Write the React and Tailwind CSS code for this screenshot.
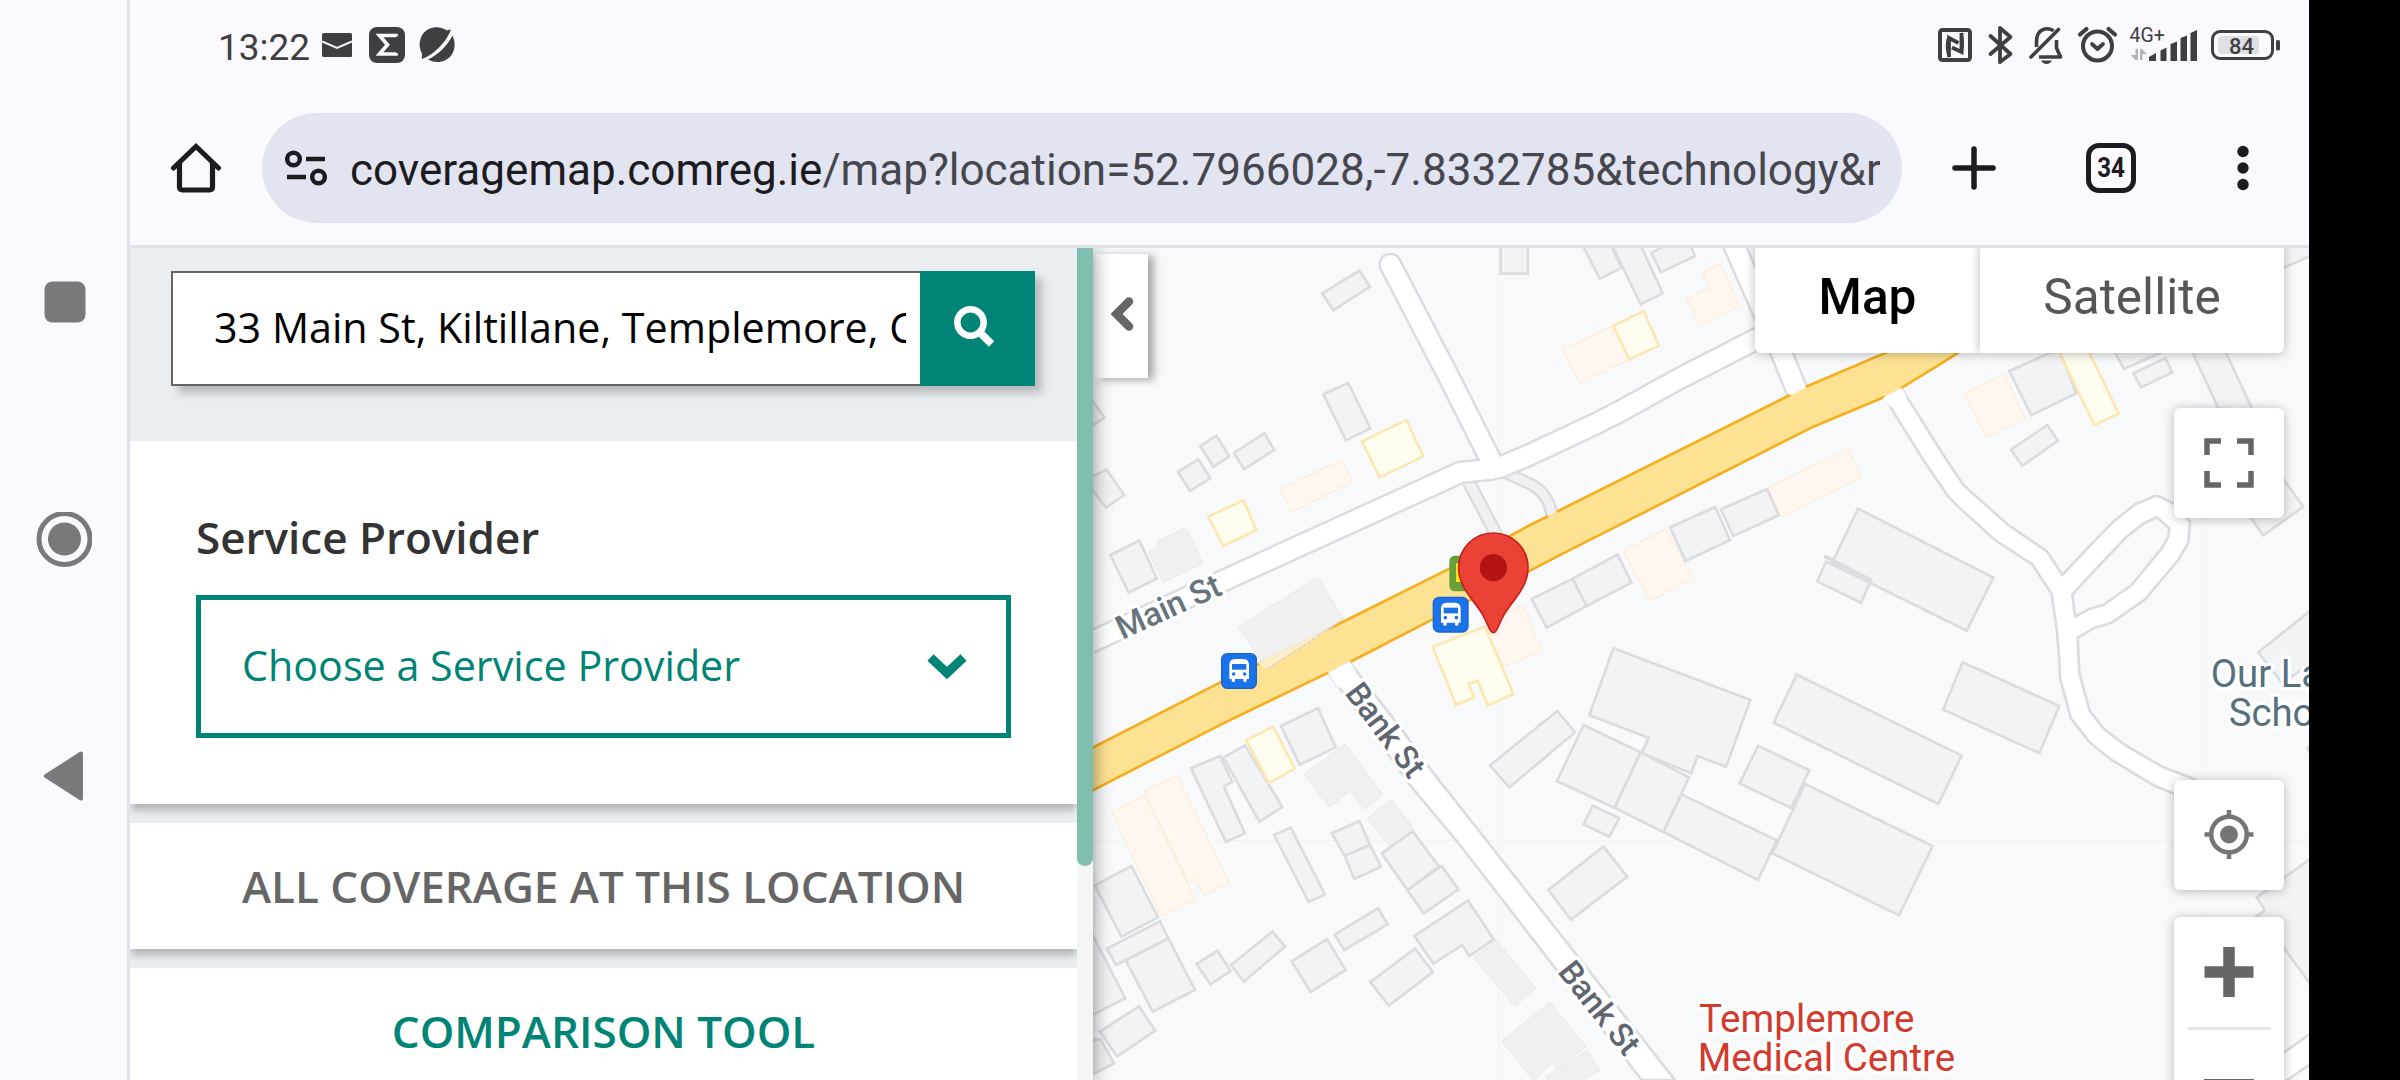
import React from "react";

const roboto = "font-['Roboto',sans-serif]";

/* ---------- system icons ---------- */

function NavRail() {
  return (
    <nav className="flex w-[130px] shrink-0 flex-col items-center justify-center gap-[181px] border-r-[3px] border-[#e1e1ec] bg-[#faf9ff]">
      <svg className="h-14 w-14" viewBox="0 0 56 56">
        <rect x="8.500" y="6.500" width="41" height="41" rx="8" fill="#79797b" />
      </svg>
      <svg className="h-14 w-14" viewBox="0 0 56 56">
        <circle cx="28.500" cy="27" r="25.500" fill="none" stroke="#79797b" strokeWidth="5" />
        <circle cx="28.500" cy="27" r="16.500" fill="#79797b" />
      </svg>
      <svg className="h-14 w-14" viewBox="0 0 56 56">
        <path d="M10 27 45 4.500V49.500Z" fill="#79797b" stroke="#79797b" strokeWidth="4" strokeLinejoin="round" />
      </svg>
    </nav>
  );
}

function StatusBar() {
  return (
    <div className="flex h-[90px] items-center pl-[88px] pr-[29px] text-[#3f3f41]">
      <span className={`${roboto} w-[104px] whitespace-nowrap pt-[5px] text-[37px] leading-[40px]`}>13:22</span>
      <svg className="h-6 w-[30px]" viewBox="0 0 30 24">
        <rect width="30" height="24" rx="1.500" fill="currentColor" />
        <path d="M0 8.500 15 15 30 8.500" fill="none" stroke="#faf9ff" strokeWidth="2" />
      </svg>
      <svg className="ml-[17px] h-9 w-9" viewBox="0 0 36 36">
        <rect width="36" height="36" rx="8" fill="currentColor" />
        <path d="M27 9.500V8.500H10.500L18.500 17.800 10.500 27H27V26" fill="none" stroke="#faf9ff" strokeWidth="3.600" />
      </svg>
      <svg className="ml-[14px] h-9 w-9" viewBox="0 0 36 36">
        <path d="M32 2.500C29 3 28 3.500 27 3 20-1.500 9-.5 3.500 7.500-.5 14 0 21 3 26.500L2.800 32C13 29 27 16 32 2.500Z" fill="currentColor" />
        <path d="M33.500 8.500C28 19.500 18 28.500 9 32.500 17 37 27 35.500 32.500 28 36.500 22 36.500 15 33.500 8.500Z" fill="currentColor" />
      </svg>
      <span className="grow" />
      <svg className="h-[40px] w-[342px]" viewBox="1938 25 342 40">
        <g fill="none" stroke="currentColor" strokeLinejoin="round">
          <rect x="1940" y="30" width="30" height="30" rx="2.500" strokeWidth="4" />
          <path d="M1949 57V38L1958.500 43M1961.500 33V52L1952 47.500" strokeWidth="3.800" strokeLinejoin="miter" />
          <path d="M1949 57C1946.500 50 1946.500 44 1948 38M1961 33C1963.500 39 1963 46 1962 52" strokeWidth="2.500" />
          <path d="M1990.500 36 2010.500 54 2000 62V28L2010.500 37 1990.500 54" strokeWidth="3.800" strokeLinecap="round" />
          <path d="M2031 57 2058.500 29.500" strokeWidth="3.600" strokeLinecap="round" />
          <path d="M2036.500 47V42C2036.500 26 2050 27.500 2053.500 31" strokeWidth="3.600" />
          <path d="M2056.500 40V48L2060.500 57H2039" strokeWidth="3.600" />
          <circle cx="2097.500" cy="46" r="14.500" strokeWidth="4" />
          <path d="M2092 44 2097.500 49 2103 44" strokeWidth="3.800" strokeLinecap="round" />
          <path d="M2080 34.500 2086.500 29M2108.500 29 2115 34.500" strokeWidth="4.200" strokeLinecap="round" />
          <rect x="2212.500" y="31.500" width="60" height="27" rx="7.500" strokeWidth="3" />
        </g>
        <path d="M2041 60.500H2052C2050 65 2043 65 2041 60.500Z" fill="currentColor" />
        <g fill="#b5b5b9">
          <path d="M2135.500 49H2138V60H2135.500L2130.500 55H2135.500Z" />
          <path d="M2140 49H2142L2147 54H2142.500V60H2140Z" />
        </g>
        <g fill="currentColor">
          <path d="M2149 61V57L2156 53V61Z" />
          <path d="M2160.500 61V50.500L2166.500 47.500V61Z" />
          <path d="M2170.500 61V44L2177 41.500V61Z" />
          <path d="M2180.500 61V38L2187 35.500V61Z" />
          <path d="M2190.500 61V33L2197 30V61Z" />
          <rect x="2276" y="40" width="4" height="10.500" rx="1.500" />
        </g>
        <rect x="2218" y="36" width="41" height="18" rx="3" fill="#dfdfe5" />
        <text x="2129.500" y="42" fontSize="19.500" fontFamily="Roboto, sans-serif" fill="currentColor">4G+</text>
        <text x="2229" y="53.500" fontSize="22" fontWeight="500" fontFamily="Roboto, sans-serif" fill="currentColor">84</text>
      </svg>
    </div>
  );
}

function Toolbar() {
  return (
    <div className="mt-[23px] flex h-[110px] items-center text-[#1b1b20]">
      <svg className="ml-[41px] h-[50px] w-[50px]" viewBox="0 0 50 50" fill="none" stroke="currentColor">
        <path d="M8.500 20V44.500A2.500 2.500 0 0 0 11 47H39A2.500 2.500 0 0 0 41.500 44.500V20" strokeWidth="5.200" />
        <path d="M2.500 25 25 3.500 47.500 25" strokeWidth="5" strokeLinecap="round" strokeLinejoin="miter" />
      </svg>
      <div className="ml-[41px] flex h-[110px] w-[1640px] items-center rounded-full bg-[#e3e4f1] pl-[23px] pr-[22px]">
        <svg className="h-[36px] w-[42px] shrink-0" viewBox="0 0 42 36" fill="none" stroke="currentColor" strokeWidth="4.500">
          <circle cx="8.500" cy="9" r="6.300" />
          <path d="M21 9H40M2 27H21" />
          <circle cx="33.500" cy="27" r="6.300" />
        </svg>
        <div className={`${roboto} ml-[23px] mt-[4px] min-w-0 grow overflow-hidden whitespace-nowrap text-[44.05px] leading-[64px] text-[#46464f]`}>
          <span className="text-[#1b1b20]">coveragemap.comreg.ie</span>/map?location=52.7966028,-7.8332785&amp;technology&amp;r
        </div>
      </div>
      <svg className="ml-[50px] h-[44px] w-[44px]" viewBox="0 0 44 44" stroke="currentColor" strokeWidth="5.500" strokeLinecap="round">
        <path d="M22 3V41M3 22H41" />
      </svg>
      <div className={`${roboto} ml-[90px] flex h-[50px] w-[50px] items-center justify-center rounded-[13px] border-[5.500px] border-[#1b1b20] text-[28px] font-bold leading-none`}>
        <span className="scale-x-[0.86]">34</span>
      </div>
      <svg className="ml-[101px] h-[46px] w-[12px]" viewBox="0 0 12 46" fill="currentColor">
        <circle cx="6" cy="6.500" r="5.700" />
        <circle cx="6" cy="23" r="5.700" />
        <circle cx="6" cy="39.500" r="5.700" />
      </svg>
    </div>
  );
}

/* ---------- side panel ---------- */

function SidePanel() {
  return (
    <aside className="relative z-10 flex w-[963px] shrink-0 bg-[#eaeef1] shadow-[0_0_18px_rgba(0,0,0,0.45)] font-['Open_Sans',sans-serif] text-[41.25px] leading-[56px]">
      <div className="flex w-[947px] flex-col overflow-hidden">
        <div className="h-[193px] shrink-0 pl-[41px] pt-[23px]">
          <div className="flex h-[115px] w-[864px] shadow-[7px_7px_8px_rgba(0,0,0,0.22)]">
            <div className="flex w-[749px] items-center border-2 border-r-0 border-[#666] bg-white pb-[3px] pl-[41px] pr-[14px] text-black">
              <div className="w-full overflow-hidden whitespace-nowrap">33 Main St, Kiltillane, Templemore, Co.</div>
            </div>
            <button className="flex w-[115px] items-center justify-center bg-[#008476]">
              <svg className="-mt-[6px] mr-[7px] h-[42px] w-[42px]" viewBox="0 0 42 42" fill="none" stroke="white">
                <circle cx="17.500" cy="17.500" r="13.200" strokeWidth="6.500" />
                <path d="M28.500 29 38.500 39" strokeWidth="7.500" />
              </svg>
            </button>
          </div>
        </div>
        <section className="h-[363px] shrink-0 bg-white px-[66px] pt-[68px] shadow-[0_7px_8px_-1px_rgba(0,0,0,0.25)]">
          <h2 className="text-[44px] leading-[56px] font-semibold text-[#333]">Service Provider</h2>
          <div className="mt-[30px] flex h-[143px] w-[815px] items-center justify-between border-[5px] border-[#008476] pl-[41px] pr-[38px] text-[#008476]">
            <span className="-mt-[3px]">Choose a Service Provider</span>
            <svg className="h-[28px] w-[42px]" viewBox="0 0 42 28" fill="none" stroke="currentColor" strokeWidth="9" strokeLinejoin="miter">
              <path d="M4.500 4.500 21 20 37.500 4.500" />
            </svg>
          </div>
        </section>
        <button className="mt-[19px] h-[126px] shrink-0 bg-white text-center text-[44px] font-semibold text-[#666] shadow-[0_7px_8px_-1px_rgba(0,0,0,0.25)]">
          ALL COVERAGE AT THIS LOCATION
        </button>
        <button className="mt-[19px] h-[126px] shrink-0 bg-white text-center text-[44px] font-semibold text-[#008476]">
          COMPARISON TOOL
        </button>
      </div>
      <div className="w-4 bg-[#f5f5f5]">
        <div className="h-[618px] rounded-b-full bg-[#80bfaf]" />
      </div>
    </aside>
  );
}

/* ---------- map ---------- */

const GREY = { fill: "#f1f3f4", stroke: "#dadce0", strokeWidth: 8 };
const PLAIN = { fill: "#f0f0f0", stroke: "#e6e6e6", strokeWidth: 2.5 };
const PEACH = { fill: "#fff7f0", stroke: "#fdebd3", strokeWidth: 3 };
const YELLOW = { fill: "#fffdf0", stroke: "#fde7b0", strokeWidth: 8 };

const blocks = [
  {
    at: "translate(0 0)",
    shapes: [
      [GREY, "697,160 808,92 840,140 730,211"],
      [GREY, "1232,0 1314,0 1314,101 1232,101"],
      [GREY, "700,463 775,429 841,565 768,601"],
      [GREY, "-30,440 5,480 44,532 0,562"],
      [GREY, "331,618 379,587 418,649 370,681"],
      [GREY, "432,639 523,580 553,629 462,688"],
      [GREY, "264,696 325,658 361,715 300,753"],
      [GREY, "0,712 50,689 103,765 48,803 0,740"],
      [GREY, "61,945 148,902 201,1015 116,1058"],
      [PLAIN, "175,936 206,920 202,905 287,862 338,970 220,1027"],
      [YELLOW, "816,604 949,540 1000,649 869,712"],
      [YELLOW, "355,830 460,781 499,870 400,918"],
      [PEACH, "570,748 755,659 787,725 605,817"],
      [PEACH, "1180,1150 1298,1095 1356,1232 1240,1280"],
      [YELLOW, "1028,1220 1185,1160 1270,1362 1194,1396 1162,1322 1136,1332 1152,1372 1098,1394"],
    ],
  },
  {
    at: "translate(1320 0)",
    shapes: [
      [GREY, "150,0 209,116 275,84 235,0"],
      [GREY, "250,24 332,193 398,160 325,0 300,0"],
      [GREY, "364,38 440,0 475,0 495,48 393,97"],
      [PEACH, "518,97 570,73 629,197 511,254 470,179 538,143"],
      [PEACH, "97,328 250,258 298,358 148,430"],
      [YELLOW, "250,258 341,213 387,317 298,358"],
      [PEACH, "713,743 955,627 993,713 753,830"],
      [GREY, "573,808 711,747 746,826 610,888"],
      [GREY, "420,862 556,801 600,900 467,963"],
      [PEACH, "280,933 408,866 488,1014 360,1083"],
      [GREY, "5,1077 128,1016 170,1098 50,1163"],
      [GREY, "128,1016 263,944 304,1028 170,1098"],
      [GREY, "888,965 862,1024 993,1088 1020,1028"],
      [GREY, "984,806 1390,1013 1310,1172 905,972"],
      [PEACH, "1303,460 1423,402 1486,535 1368,592"],
    ],
  },
  {
    at: "translate(2610 0)",
    shapes: [
      [GREY, "148,393 300,325 348,460 214,526"],
      [YELLOW, "280,300 370,300 476,521 403,555"],
      [GREY, "450,310 492,387 620,330 600,300"],
      [GREY, "520,400 616,354 637,397 543,442"],
      [GREY, "685,310 775,505 880,515 785,310"],
      [GREY, "153,629 262,555 294,602 187,678"],
      [GREY, "940,675 1030,800 910,886 860,815"],
      [GREY, "960,88 1060,44 1060,0 940,0"],
      [GREY, "1060,1105 895,1237 968,1330 1060,1262"],
    ],
  },
  {
    at: "translate(0 1260)",
    shapes: [
      [PEACH, "65,457 163,408 317,718 213,770"],
      [PEACH, "163,392 262,346 417,668 342,707 317,658 295,667"],
      [GREY, "303,325 390,288 427,366 402,380 465,520 408,546"],
      [GREY, "400,293 465,256 577,441 508,485"],
      [YELLOW, "469,240 550,200 614,326 536,369"],
      [GREY, "573,198 684,144 737,262 629,314"],
      [PLAIN, "642,342 765,252 879,405 824,448 780,393 718,441"],
      [PLAIN, "832,475 904,417 973,510 900,560"],
      [GREY, "552,525 602,503 705,703 656,726"],
      [GREY, "726,520 808,483 840,555 764,588"],
      [GREY, "764,588 840,555 873,620 793,657"],
      [GREY, "952,690 1055,618 1105,688 1001,760"],
      [GREY, "875,580 968,514 1047,619 952,690"],
      [GREY, "14,676 124,618 204,772 94,830"],
      [GREY, "51,866 210,784 235,835 78,915"],
      [GREY, "108,902 235,835 315,990 188,1055"],
      [GREY, "-60,740 5,820 106,1015 0,1068"],
      [GREY, "30,1115 147,1039 196,1112 81,1189"],
      [GREY, "-20,1140 32,1138 72,1210 0,1247"],
      [GREY, "320,912 383,872 422,933 361,973"],
      [GREY, "423,915 547,815 585,859 462,965"],
      [GREY, "605,904 711,837 767,930 662,996"],
      [GREY, "734,824 864,745 893,793 763,870"],
      [GREY, "973,828 1134,722 1211,838 1138,888 1117,855 1030,911"],
      [GREY, "841,966 975,866 1029,936 896,1037"],
      [PLAIN, "1150,893 1218,840 1338,985 1275,1038"],
      [GREY, "1200,316 1402,153 1455,217 1258,382"],
      [PLAIN, "1236,1143 1379,1026 1488,1160 1400,1225 1388,1207 1330,1262"],
      [PLAIN, "1368,1250 1492,1170 1530,1230 1400,1310"],
    ],
  },
  {
    at: "translate(1320 1260)",
    shapes: [
      [GREY, "250,-35 661,119 588,320 502,288 484,340 335,280 356,233 178,166"],
      [GREY, "161,195 332,277 254,444 81,363"],
      [GREY, "332,277 477,352 400,516 254,444"],
      [GREY, "455,403 740,541 684,660 400,516"],
      [GREY, "684,257 838,331 783,444 629,370"],
      [GREY, "825,372 1208,558 1107,766 727,580"],
      [GREY, "800,44 1295,287 1225,432 731,188"],
      [GREY, "188,437 268,474 238,530 161,493"],
      [GREY, "220,560 292,650 123,779 55,690"],
    ],
  },
  {
    at: "translate(2610 1260)",
    shapes: [
      [GREY, "8,7 298,138 238,279 -51,149"],
      [GREY, "1060,590 890,713 915,750 850,800 940,820 1060,985"],
      [GREY, "1060,248 1042,265 1060,290"],
    ],
  },
];

function BusStop({ x, y }) {
  return (
    <g transform={`translate(${x} ${y})`}>
      <rect x="2" y="2" width="104" height="104" rx="17" fill="#1a73e8" stroke="#1c62cd" strokeWidth="4" />
      <path d="M25 78V36Q25 18 42 18H67Q84 18 84 36V78H77V84Q77 87 72 87Q67 87 67 84V78H42V84Q42 87 37 87Q32 87 32 84V78Z" fill="white" />
      <rect x="33" y="33" width="43" height="17" fill="#1a73e8" />
      <circle cx="38" cy="63" r="5.500" fill="#1a73e8" />
      <circle cx="71" cy="63" r="5.500" fill="#1a73e8" />
    </g>
  );
}

function Label({ at, size, color, weight, children, length }) {
  return (
    <text
      transform={at}
      fontSize={size}
      fontWeight={weight}
      fill={color}
      stroke="white"
      strokeWidth="20"
      strokeLinejoin="round"
      paintOrder="stroke"
      textLength={length}
      fontFamily="Roboto, sans-serif"
    >
      {children}
    </text>
  );
}

function MapCanvas() {
  const road = { fill: "none", strokeLinejoin: "round" };
  const mainSt = "0,1208 395,1024 1112,697 1200,688 1230,682 1320,644 1520,550 1585,517 1760,420 2000,297 2060,265";
  const lane = "901,74 1071,400 1208,672";
  const north = "1925,0 2075,340 2128,470";
  return (
    <svg className="block h-[832px] w-[1216px]" viewBox="9 24 3648 2496">
      <rect x="0" y="0" width="3700" height="2600" fill="#f8f9fb" />
      <path d="M1226 0V2520M3337 0V2520M0 1801H3660" stroke="#f1f2f5" strokeWidth="3" />
      {blocks.map((b) => (
        <g key={b.at} transform={b.at}>
          {b.shapes.map(([style, points]) => (
            <polygon key={points} points={points} {...style} />
          ))}
        </g>
      ))}
      <path d="M2202 948 2345 1022" stroke="#dadce0" strokeWidth="11" />
      <g {...road}>
        <polyline points="1125,705 1222,890" stroke="#dadce0" strokeWidth="42" />
        <path d="M1240 695 1320 732Q1380 760 1388 840" stroke="#dadce0" strokeWidth="39" />
        <polyline points="1125,705 1222,890" stroke="#eff1f3" strokeWidth="28" />
        <path d="M1240 695 1320 732Q1380 760 1388 840" stroke="#eff1f3" strokeWidth="25" />
        {[mainSt, lane, north].map((p) => (
          <polyline key={p} points={p} stroke="#dadce0" strokeWidth="72" strokeLinecap={p === lane ? "round" : "butt"} />
        ))}
        {[mainSt, lane, north].map((p) => (
          <polyline key={p} points={p} stroke="white" strokeWidth="57" strokeLinecap={p === lane ? "round" : "butt"} />
        ))}
      </g>
      <polygon points="715,1298 860,1495 960,1635 1110,1815 1655,2520 1755,2520 1165,1770 1015,1580 940,1475 780,1268" fill="white" stroke="#dadce0" strokeWidth="8" />
      <g transform="translate(2610 0)" stroke="#dadce0" strokeWidth="8" strokeLinejoin="round">
        <path fill="white" d="M-175 445 -50 645 10 735 145 855 262 935 307 1005 385 922 460 845 525 793 585 768 600 770 645 793 690 845 685 908 655 960 555 1078 455 1148 405 1163 353 1193 358 1298 388 1410 430 1465 495 1515 610 1582 705 1618 720 1690 645 1662 585 1638 455 1560 387 1505 333 1435 300 1315 298 1260 290 1165 275 1062 217 973 105 900 0 805-35 770-110 660-225 475" />
        <path fill="#f8f9fb" d="M337 1063 400 995 500 890 555 848 590 832 628 865 625 890 605 925 515 1035 430 1095 385 1108 345 1130Z" />
        <path fill="white" d="M930 2468 1070 2367V2460L930 2555Z" />
      </g>
      <path
        fill="#fde293"
        d="M0 1527 395 1325 510 1270 740 1155 1080 985 1320 855 1375 828 1400 815 2100 465 2148 440 2355 352 2390 338 2500 270 2720 270 2605 338 2530 385 2432 445 2385 470 2170 560 1430 935 1320 992 1150 1075 790 1258 715 1298 400 1450 0 1655Z"
      />
      <g fill="none" stroke="#f5ae1d" strokeWidth="8">
        <path d="M0 1527 395 1325 510 1270 740 1155 1080 985 1320 855 1375 828M1400 815 2100 465M2148 440 2355 352 2390 338 2450 300M2640 315 2605 338 2530 385 2432 445M2385 470 2170 560 1430 935 1320 992 1150 1075 780 1266M715 1298 400 1450 0 1655" />
      </g>
      <path d="M715 1298 780 1264 800 1300 745 1345ZM2378 474 2436 444 2450 470 2400 500ZM2100 455 2143 435 2148 442 2105 466Z" fill="white" />
      <polygon points="446,1162 683,1010 760,1135 530,1288" {...PLAIN} fillOpacity=".9" />
      <path d="M505 1270 735 1158 530 1288Z" fill="#fdeec6" />
      <path d="M530 1288 640 1217 760 1137" stroke="#d8d3c5" strokeWidth="4" strokeDasharray="14 4" fill="none" />

      <Label at="translate(97 1200) rotate(-24.500)" size="99" weight="500" color="#68737b" length="334">Main St</Label>
      <Label at="translate(762 1360) rotate(53)" size="98" weight="500" color="#5f6670" length="326">Bank St</Label>
      <Label at="translate(1400 2196) rotate(51.500)" size="98" weight="500" color="#5f6670" length="328">Bank St</Label>
      <Label at="translate(1827 2377)" size="115.500" color="#d33a2e">Templemore</Label>
      <Label at="translate(1823 2492)" size="115.500" color="#d33a2e">Medical Centre</Label>
      <Label at="translate(3362 1341)" size="115" color="#56707d">Our La</Label>
      <Label at="translate(3416 1457)" size="115" color="#56707d">Scho</Label>

      <BusStop x={393} y={1239} />
      <rect x="1078" y="947" width="107" height="107" rx="16" fill="#689f38" />
      <rect x="1098" y="970" width="60" height="56" fill="#fbe30d" />
      <BusStop x={1028} y={1070} />
      <path
        d="M1210 879C1152 879 1106 925 1106 983 1106 1042 1150 1078 1177 1122 1194 1150 1198 1178 1210 1178S1226 1150 1243 1122C1270 1078 1314 1042 1314 983 1314 925 1268 879 1210 879Z"
        fill="#ea4335"
        stroke="#c5221f"
        strokeWidth="5"
      />
      <circle cx="1210" cy="983" r="41" fill="#b31412" />
    </svg>
  );
}

function MapControls() {
  const card = "flex items-center justify-center bg-white shadow-[0_1px_11px_rgba(0,0,0,0.27)]";
  return (
    <>
      <div className="absolute left-[2px] top-[6px] flex h-[124px] w-[53px] items-center justify-center bg-white shadow-[6px_2px_8px_rgba(0,0,0,0.32)]">
        <svg className="-mt-[5px] ml-[2px] h-[36px] w-[24px]" viewBox="0 0 24 36" fill="none" stroke="#666" strokeWidth="8.500" strokeLinecap="round">
          <path d="M18 5.500 5.500 18 18 30.500" strokeLinejoin="miter" />
        </svg>
      </div>
      <div className={`${roboto} absolute right-[25px] -top-[5px] flex h-[110px] text-[49.5px] leading-none`}>
        <div className={`${card} w-[225px] rounded-bl-md font-medium text-black`}>Map</div>
        <div className={`${card} w-[304px] rounded-br-md text-[#565656]`}>Satellite</div>
      </div>
      <div className="absolute right-[25px] top-[160px] flex w-[110px] flex-col">
        <button className={`${card} h-[110px] rounded-md`}>
          <svg className="mr-px h-[50px] w-[50px]" viewBox="0 0 50 50" fill="none" stroke="#666" strokeWidth="5.500">
            <path d="M17 3H3V17M33 3H47V17M47 33V47H33M17 47H3V33" />
          </svg>
        </button>
        <button className={`${card} mt-[262px] h-[110px] rounded-md`}>
          <svg className="mr-px h-[50px] w-[50px]" viewBox="0 0 50 50" fill="none" stroke="#757575" strokeWidth="4.500">
            <circle cx="25" cy="24.500" r="17.800" />
            <circle cx="25" cy="24.500" r="9" fill="#757575" stroke="none" />
            <path d="M25 0V6.500M25 42.500V49M.5 24.500H7M43 24.500H49.500" />
          </svg>
        </button>
        <div className={`${card} mt-[27px] h-[223px] flex-col rounded-md`}>
          <div className="flex h-[110px] items-center">
            <svg className="mr-px h-[50px] w-[50px]" viewBox="0 0 50 50" stroke="#666" strokeWidth="11.500">
              <path d="M25 0V50M.5 25H49.500" />
            </svg>
          </div>
          <div className="h-[3px] w-[83px] bg-[#e6e6e6]" />
          <div className="flex h-[110px] items-center">
            <div className="h-3 w-[50px] bg-[#666]" />
          </div>
        </div>
      </div>
    </>
  );
}

export default function App() {
  return (
    <div className="flex h-[1080px] w-[2400px] overflow-hidden bg-black">
      <NavRail />
      <div className="flex w-[2179px] shrink-0 flex-col">
        <header className="h-[248px] shrink-0 border-b-[3px] border-[#e1e1ec] bg-[#faf9ff]">
          <StatusBar />
          <Toolbar />
        </header>
        <main className="flex h-[832px] overflow-hidden">
          <SidePanel />
          <div className="relative h-[832px] w-[1216px] overflow-hidden">
            <MapCanvas />
            <MapControls />
          </div>
        </main>
      </div>
    </div>
  );
}
